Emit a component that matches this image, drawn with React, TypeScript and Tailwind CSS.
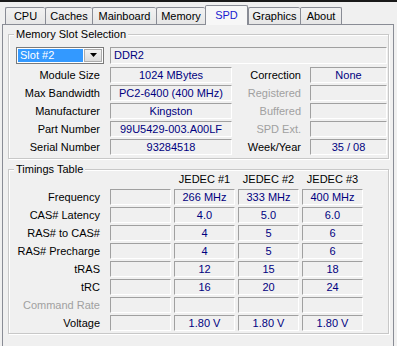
import React from 'react'

const tabs = [
  { name: 'CPU', w: 'w-[40px]' },
  { name: 'Caches', w: 'w-[47px]' },
  { name: 'Mainboard', w: 'w-[64px]' },
  { name: 'Memory', w: 'w-[49px]' },
  { name: 'SPD', w: 'w-[43px]', active: true },
  { name: 'Graphics', w: 'w-[52px]' },
  { name: 'About', w: 'w-[42px]' },
]

const timings = [
  { label: 'Frequency', values: ['266 MHz', '333 MHz', '400 MHz'] },
  { label: 'CAS# Latency', values: ['4.0', '5.0', '6.0'] },
  { label: 'RAS# to CAS#', values: ['4', '5', '6'] },
  { label: 'RAS# Precharge', values: ['4', '5', '6'] },
  { label: 'tRAS', values: ['12', '15', '18'] },
  { label: 'tRC', values: ['16', '20', '24'] },
  { label: 'Command Rate', values: ['', '', ''], disabled: true },
  { label: 'Voltage', values: ['1.80 V', '1.80 V', '1.80 V'] },
]

function Field({ value, className = '' }: { value?: string, className?: string }) {
  return (
    <div className={`h-[16px] flex items-center justify-center border-t border-l border-b border-r border-t-[#a0a0a0] border-l-[#a0a0a0] border-b-white border-r-white text-[#000080] leading-none whitespace-nowrap overflow-hidden ${className}`}>
      {value}
    </div>
  )
}

function Group({ title, className = '', children }: { title: string, className?: string, children: React.ReactNode }) {
  return (
    <div className={`relative border border-[#c8c8c8] shadow-[inset_1px_1px_0_#fff,1px_1px_0_#fff] ${className}`}>
      <span className="absolute -top-[8px] left-[5px] px-[2px] bg-[#f0f0f0] leading-[14px] text-black">{title}</span>
      {children}
    </div>
  )
}

export default function App() {
  return (
    <div className="w-[397px] h-[346px] bg-[#f0f0f0] overflow-hidden text-[11px] text-black" style={{ fontFamily: '"Liberation Sans", Arial, sans-serif' }}>
      <div className="h-[2px] bg-[#1a1a1a]" />

      {/* tab strip */}
      <div className="h-[22px] pl-[5px] flex items-end relative z-10">
        {tabs.map(t => (
          <div
            key={t.name}
            className={
              t.active
                ? `${t.w} h-[20px] -mb-px flex items-center justify-center bg-[#f7f7f7] border-t border-l border-r border-[#898c95] rounded-t-[2px] text-[#1a1ad0] pb-[1px]`
                : `${t.w} h-[17px] flex items-center justify-center bg-gradient-to-b from-[#f2f2f2] to-[#e6e6e6] border-t border-l border-[#898c95] last:border-r rounded-t-[2px] pt-[1px]`
            }
          >
            {t.name}
          </div>
        ))}
      </div>

      {/* panel */}
      <div className="ml-[2px] w-[392px] h-[400px] border-t border-l border-r border-[#898c95] bg-[#f0f0f0] pl-[5px] pr-[4px] pt-[9px]">
        <Group title="Memory Slot Selection" className="h-[125px] pt-[11px] pl-[7px] pr-[1px]">
          <div className="h-[18px] flex items-center gap-[6px]">
            <div className="w-[88px] h-[17px] border border-[#7a7a7a] bg-white flex p-[1px]">
              <div className="flex-1 bg-[#3399ff] text-white flex items-center pl-[2px] leading-none">Slot #2</div>
              <div className="w-[18px] ml-[1px] bg-gradient-to-b from-[#f2f2f2] to-[#dcdcdc] border border-[#acacac] flex items-center justify-center">
                <svg width="7" height="4" viewBox="0 0 7 4"><path d="M0 0h7L3.5 4z" fill="#000" /></svg>
              </div>
            </div>
            <div className="flex-1 h-[17px] flex items-center pl-[3px] border-t border-l border-b border-r border-t-[#a0a0a0] border-l-[#a0a0a0] border-b-white border-r-white text-[#000080] leading-none">DDR2</div>
          </div>
          <div className="mt-[2px] flex flex-col">
            {[
              ['Module Size', '1024 MBytes', 'Correction', 'None', false],
              ['Max Bandwidth', 'PC2-6400 (400 MHz)', 'Registered', '', true],
              ['Manufacturer', 'Kingston', 'Buffered', '', true],
              ['Part Number', '99U5429-003.A00LF', 'SPD Ext.', '', true],
              ['Serial Number', '93284518', 'Week/Year', '35 / 08', false],
            ].map(([l, v, r, rv, dis]) => (
              <div key={l as string} className="h-[18px] flex items-center">
                <span className="w-[84px] text-right">{l}</span>
                <Field value={v as string} className="ml-[10px] w-[122px]" />
                <span className={`w-[69px] text-right ${dis ? 'text-[#a0a0a0]' : ''}`}>{r}</span>
                <Field value={rv as string} className="ml-[9px] flex-1" />
              </div>
            ))}
          </div>
        </Group>

        <Group title="Timings Table" className="mt-[10px] h-[165px] pl-[7px]">
          <div className="h-[18px] flex items-center">
            <span className="w-[84px]" />
            <span className="ml-[10px] w-[61px]" />
            {['JEDEC #1', 'JEDEC #2', 'JEDEC #3'].map(h => (
              <span key={h} className="ml-[3px] w-[61px] text-center">{h}</span>
            ))}
          </div>
          {timings.map(row => (
            <div key={row.label} className="h-[18px] flex items-center">
              <span className={`w-[84px] text-right ${row.disabled ? 'text-[#a0a0a0]' : ''}`}>{row.label}</span>
              <Field className="ml-[10px] w-[61px]" />
              {row.values.map((v, i) => (
                <Field key={i} value={v} className="ml-[3px] w-[61px]" />
              ))}
            </div>
          ))}
        </Group>
      </div>
    </div>
  )
}
